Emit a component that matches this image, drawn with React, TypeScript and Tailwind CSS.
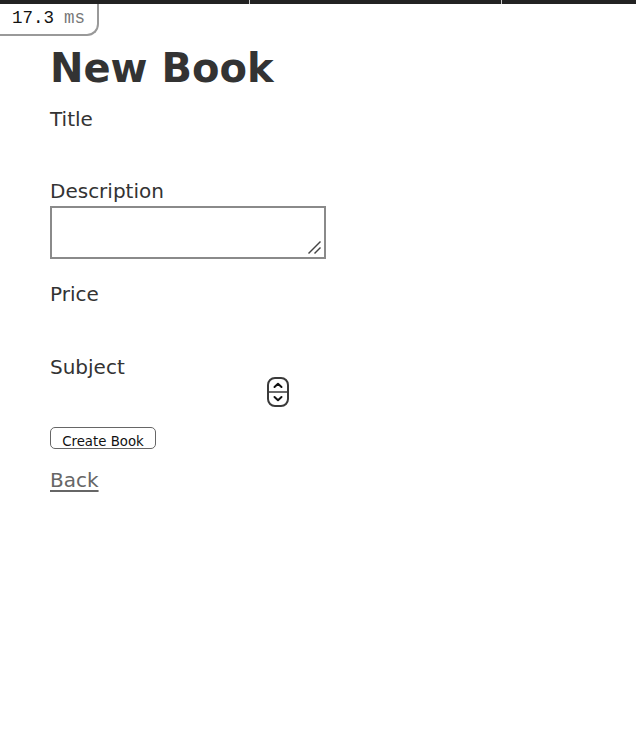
import React from 'react';

function Spinner() {
  return (
    <svg width="22" height="30" viewBox="0 0 22 30" fill="none">
      <rect x="1" y="1" width="20" height="28" rx="7" stroke="#3a3a3a" strokeWidth="2" />
      <line x1="1" y1="15" x2="21" y2="15" stroke="#3a3a3a" strokeWidth="1.5" />
      <path d="M7.5 10 L11 6.8 L14.5 10" stroke="#111" strokeWidth="2" strokeLinecap="round" strokeLinejoin="round" />
      <path d="M7.5 20 L11 23.2 L14.5 20" stroke="#111" strokeWidth="2" strokeLinecap="round" strokeLinejoin="round" />
    </svg>
  );
}

export default function App() {
  return (
    <div className="relative min-h-[756px] w-[636px] bg-white text-[#333] font-['DejaVu_Sans',sans-serif]">
      {/* Top bar */}
      <div className="flex h-[4px] bg-[#222]">
        <div className="w-[250px] border-r border-[#ccc]" />
        <div className="w-[252px] border-r border-[#ccc]" />
        <div className="flex-1" />
      </div>

      {/* Timing badge */}
      <div className="absolute left-0 top-[4px] flex h-[32px] w-[99px] items-center rounded-br-[12px] border-b-2 border-r-2 border-[#999] bg-white pl-[12px] font-['Liberation_Mono',monospace] text-[17.5px] leading-none">
        <span className="text-[#111]">17.3</span>
        <span className="ml-[10px] text-[#777]">ms</span>
      </div>

      <div className="px-[50px]">
        <h1 className="mt-[40px] text-[40px] font-bold leading-[48px]">New Book</h1>

        <form className="mt-[15px]">
          <div>
            <label className="block text-[20px] leading-[24px]">Title</label>
            <input type="text" className="block h-[48px] w-[276px] bg-transparent outline-none" />
          </div>

          <div>
            <label className="block text-[20px] leading-[24px]">Description</label>
            <div className="relative mt-[3px] w-[276px]">
              <textarea className="block h-[53px] w-[276px] resize-none border-2 border-[#8a8a8a] bg-white" />
              <svg className="absolute bottom-[4px] right-[4px]" width="15" height="15" viewBox="0 0 15 15">
                <line x1="1.5" y1="13.5" x2="13.5" y2="1.5" stroke="#444" strokeWidth="1.5" />
                <line x1="7.5" y1="13.5" x2="13.5" y2="7.5" stroke="#444" strokeWidth="1.5" />
              </svg>
            </div>
          </div>

          <div className="mt-[23px]">
            <label className="block text-[20px] leading-[24px]">Price</label>
            <input type="text" className="block h-[49px] w-[276px] bg-transparent outline-none" />
          </div>

          <div>
            <label className="block text-[20px] leading-[24px]">Subject</label>
            <div className="-mt-[2px] flex h-[50px] items-start pl-[217px]">
              <Spinner />
            </div>
          </div>

          <button
            type="button"
            className="flex h-[22px] w-[106px] items-start justify-center rounded-[5px] border-[1.5px] border-[#666] bg-white pt-[7px] text-[13.3px] leading-none text-[#111]"
          >
            Create Book
          </button>
        </form>

        <a href="#" className="mt-[19px] block w-fit text-[20px] leading-[24px] text-[#666] underline underline-offset-[3px]">
          Back
        </a>
      </div>
    </div>
  );
}
